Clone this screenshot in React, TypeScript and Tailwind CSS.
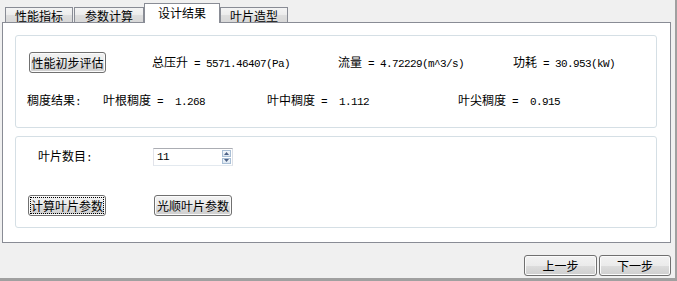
import React from "react";

// ASCII runs are drawn in a monospace face so each character takes 6px, like the original dialog font
function Mixed({ text }: { text: string }) {
  const parts = text.split(/([\x20-\x7e]+)/);
  return (
    <>
      {parts.map((p, i) =>
        /[\x20-\x7e]/.test(p) ? (
          <span key={i} className="whitespace-pre font-['Liberation_Mono'] text-[11px] tracking-[-0.6px]">
            {p}
          </span>
        ) : (
          <span key={i}>{p}</span>
        )
      )}
    </>
  );
}

function Tab({ label, active }: { label: string; active?: boolean }) {
  if (active) {
    return (
      <div className="relative z-10 mb-[-1px] flex h-[20px] w-[76px] items-center justify-center border border-b-0 border-[#898c95] bg-white pb-[1px]">
        {label}
      </div>
    );
  }
  return (
    <div className="flex h-[15px] items-center justify-center border border-b-0 border-[#898c95] bg-[linear-gradient(#f4f4f4_0%,#ececec_50%,#dedede_51%,#d8d8d8_100%)] pt-[1px]">
      {label}
    </div>
  );
}

function WinButton({ label, width, focused }: { label: string; width: string; focused?: boolean }) {
  return (
    <button
      className={`relative flex h-[21px] ${width} items-center justify-center rounded-[3px] border border-[#707070] bg-[linear-gradient(#f2f2f2_0%,#ebebeb_50%,#dddddd_51%,#cfcfcf_100%)] text-black shadow-[inset_0_0_0_1px_#fbfbfb]`}
    >
      {label}
      {focused && <span className="pointer-events-none absolute inset-[1px] border border-dotted border-black" />}
    </button>
  );
}

function SpinBox({ value }: { value: string }) {
  return (
    <div className="flex h-[18px] w-[80px] items-stretch border border-[#abadb3] border-b-[#e3e9ef] border-l-[#e2e3ea] border-r-[#dbdfe6] bg-white">
      <div className="flex flex-1 items-center pl-[3px]">
        <Mixed text={value} />
      </div>
      <div className="flex w-[10px] flex-col gap-[1px] py-[1px] pr-[1px]">
        <div className="flex flex-1 items-center justify-center border border-[#a9bfd6] bg-[linear-gradient(#f3f7fb,#dde7f1)]">
          <svg width="5" height="3" viewBox="0 0 5 3">
            <path d="M0 3 L2.5 0 L5 3 Z" fill="#4d6185" />
          </svg>
        </div>
        <div className="flex flex-1 items-center justify-center border border-[#a9bfd6] bg-[linear-gradient(#f3f7fb,#dde7f1)]">
          <svg width="5" height="3" viewBox="0 0 5 3">
            <path d="M0 0 L2.5 3 L5 0 Z" fill="#4d6185" />
          </svg>
        </div>
      </div>
    </div>
  );
}

export default function App() {
  return (
    <div className="flex h-[281px] w-[677px] flex-col border-b-[3px] border-r-2 border-[#a0a0a0] bg-[#f0f0f0] font-['Noto_Sans_CJK_SC',sans-serif] text-[12px] leading-none text-black">
      {/* tab strip */}
      <div className="flex h-[22px] items-end pl-[5px]">
        <div className="w-[68px]">
          <Tab label="性能指标" />
        </div>
        <div className="ml-[1px] w-[70px]">
          <Tab label="参数计算" />
        </div>
        <Tab label="设计结果" active />
        <div className="w-[68px]">
          <Tab label="叶片造型" />
        </div>
      </div>

      {/* tab pane */}
      <div className="ml-[2px] mr-[4px] flex h-[221px] flex-col gap-[8px] border border-[#898c95] bg-white pb-[14px] pl-[12px] pr-[13px] pt-[12px]">
        {/* results group */}
        <div className="flex h-[93px] flex-col gap-[17px] rounded-[3px] border border-[#d5dfe5] pb-[16px] pt-[16px]">
          <div className="flex h-[21px] items-center">
            <div className="ml-[13px] w-[123px]">
              <WinButton label="性能初步评估" width="w-[77px]" />
            </div>
            <div className="w-[186px]">
              <Mixed text="总压升 = 5571.46407(Pa)" />
            </div>
            <div className="w-[175px]">
              <Mixed text="流量 = 4.72229(m^3/s)" />
            </div>
            <div>
              <Mixed text="功耗 = 30.953(kW)" />
            </div>
          </div>
          <div className="flex h-[21px] items-center">
            <div className="ml-[11px] w-[76px]">
              <Mixed text="稠度结果:" />
            </div>
            <div className="w-[164px]">
              <Mixed text="叶根稠度 =  1.268" />
            </div>
            <div className="w-[191px]">
              <Mixed text="叶中稠度 =  1.112" />
            </div>
            <div>
              <Mixed text="叶尖稠度 =  0.915" />
            </div>
          </div>
        </div>

        {/* blade group */}
        <div className="flex h-[92px] flex-col gap-[29px] rounded-[3px] border border-[#d5dfe5] pb-[11px] pt-[11px]">
          <div className="flex h-[18px] items-center">
            <div className="ml-[22px] w-[115px]">
              <Mixed text="叶片数目:" />
            </div>
            <SpinBox value="11" />
          </div>
          <div className="flex h-[21px] items-center gap-[48px] pl-[12px]">
            <WinButton label="计算叶片参数" width="w-[78px]" focused />
            <WinButton label="光顺叶片参数" width="w-[78px]" />
          </div>
        </div>
      </div>

      {/* wizard buttons */}
      <div className="flex justify-end gap-[2px] pr-[4px] pt-[12px]">
        <WinButton label="上一步" width="w-[73px]" />
        <WinButton label="下一步" width="w-[72px]" />
      </div>
    </div>
  );
}
